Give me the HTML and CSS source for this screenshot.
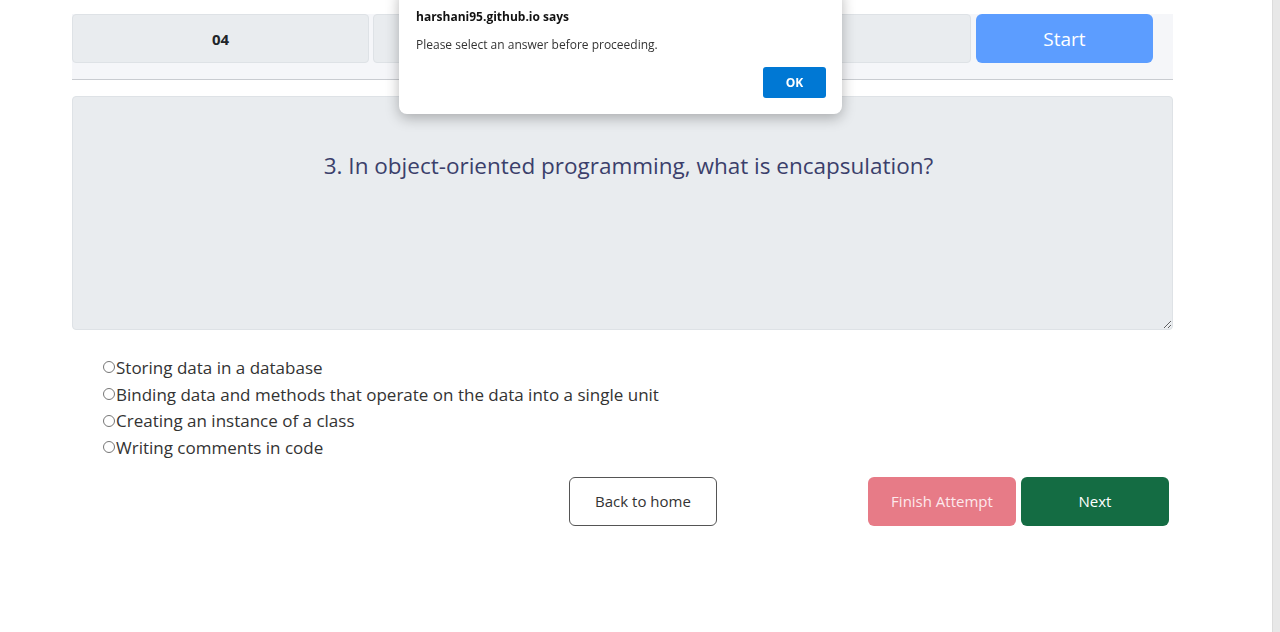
FILE: index.html
```html
<!DOCTYPE html>
<html lang="en">
<head>
    <meta charset="UTF-8">
    <meta name="viewport" content="width=device-width, initial-scale=1.0">
    <title>Quiz</title>
    <link rel="stylesheet" href="styles.css">
</head>
<body>
    <div class="quiz">
        <div class="top-bar">
            <div class="info-box">04</div>
            <div class="info-box"></div>
            <div class="info-box"></div>
            <button class="start-btn">Start</button>
        </div>

        <textarea class="question" readonly>3. In object-oriented programming, what is encapsulation?</textarea>

        <div class="answers">
            <label class="answer"><input type="radio" name="answer">Storing data in a database</label>
            <label class="answer"><input type="radio" name="answer">Binding data and methods that operate on the data into a single unit</label>
            <label class="answer"><input type="radio" name="answer">Creating an instance of a class</label>
            <label class="answer"><input type="radio" name="answer">Writing comments in code</label>
        </div>

        <div class="actions">
            <button class="btn btn-home">Back to home</button>
            <div class="actions-right">
                <button class="btn btn-finish">Finish Attempt</button>
                <button class="btn btn-next">Next</button>
            </div>
        </div>
    </div>

    <!-- browser alert -->
    <div class="alert">
        <div class="alert-title">harshani95.github.io says</div>
        <div class="alert-msg">Please select an answer before proceeding.</div>
        <div class="alert-foot">
            <button class="alert-ok">OK</button>
        </div>
    </div>

    <div class="scrollbar"></div>
</body>
</html>
```

FILE: styles.css
```css
body {
    margin: 0;
    font-family: "Open Sans", "Noto Sans", Arial, sans-serif;
    background-color: white;
    color: #333;
}

.quiz {
    width: 1101px;
    margin-left: 72px;
    padding-top: 14px;
}

.top-bar {
    display: flex;
    gap: 4px;
    padding-right: 20px;
    padding-bottom: 16px;
    background-color: #f5f6f9;
    border-bottom: 1px solid #c9ccd1;
}

.info-box {
    flex: 0 0 297px;
    height: 49px;
    box-sizing: border-box;
    display: flex;
    align-items: center;
    justify-content: center;
    background-color: #e9ecef;
    border: 1px solid #dee2e6;
    border-radius: 4px;
    font-weight: bold;
    font-size: 15px;
    color: #212529;
}

.start-btn {
    width: 177px;
    height: 49px;
    margin-left: 1px;
    border: none;
    border-radius: 6px;
    background-color: #5c9dff;
    color: white;
    font-family: inherit;
    font-size: 19px;
}

.question {
    display: block;
    width: 100%;
    height: 234px;
    margin-top: 16px;
    box-sizing: border-box;
    padding: 53px 14px 0 26px;
    background-color: #e9ecef;
    border: 1px solid #dee2e6;
    border-radius: 4px;
    text-align: center;
    font-family: inherit;
    font-size: 22.5px;
    color: #3b3f6b;
    outline: none;
}

.answers {
    margin-top: 24px;
    padding-left: 31px;
}

.answer {
    display: flex;
    align-items: center;
    height: 26.7px;
    font-size: 17px;
    color: #333;
}

.answer input {
    width: 12px;
    height: 12px;
    margin: 0 1px 0 0;
}

.actions {
    display: flex;
    margin-top: 16px;
    padding-left: 497px;
    padding-right: 4px;
}

.actions-right {
    display: flex;
    gap: 5px;
    margin-left: auto;
}

.btn {
    width: 148px;
    height: 49px;
    border-radius: 6px;
    font-family: inherit;
    font-size: 15px;
    cursor: pointer;
}

.btn-home {
    background-color: white;
    border: 1px solid #555;
    color: #333;
}

.btn-finish {
    background-color: #e77b87;
    border: none;
    color: #fde9ec;
}

.btn-next {
    background-color: #146c43;
    border: none;
    color: white;
}

.alert {
    position: fixed;
    top: -12px;
    left: 399px;
    width: 443px;
    height: 126px;
    box-sizing: border-box;
    padding: 20px 16px 0 17px;
    background-color: white;
    border-radius: 8px;
    box-shadow: 0 4px 14px rgba(0,0,0,0.28);
    font-family: "Open Sans", "Noto Sans", Arial, sans-serif;
}

.alert-title {
    font-size: 12px;
    font-weight: bold;
    color: #111;
}

.alert-msg {
    margin-top: 11px;
    font-size: 12px;
    color: #333;
}

.alert-foot {
    display: flex;
    justify-content: flex-end;
    margin-top: 14px;
}

.alert-ok {
    width: 63px;
    height: 31px;
    border: none;
    border-radius: 3px;
    background-color: #0078d4;
    color: white;
    font-family: inherit;
    font-size: 12px;
    font-weight: bold;
}

.scrollbar {
    position: fixed;
    top: 0;
    right: 0;
    width: 7px;
    height: 100%;
    background-color: #e8e8e8;
    border-left: 1px solid #dcdcdc;
}
```
